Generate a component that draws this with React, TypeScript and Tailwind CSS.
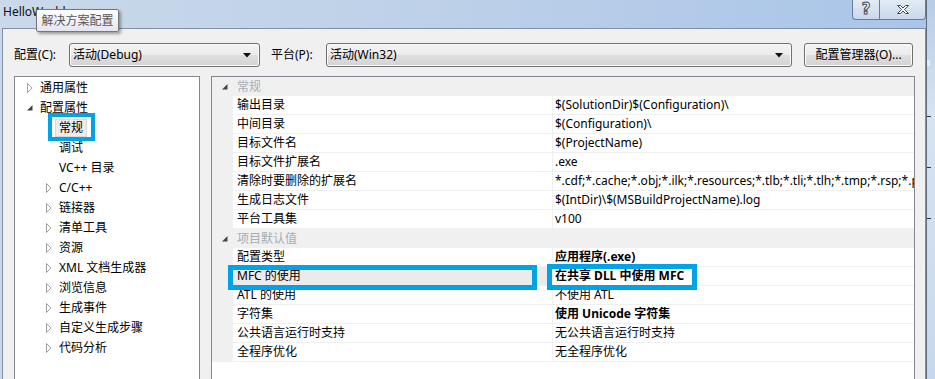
import React from "react";

const FONT = "font-['Noto_Sans','Noto_Sans_CJK_SC',sans-serif]";

type TreeItem = {
  label: string;
  level: 1 | 2;
  icon: "closed" | "open" | "none";
  selected?: boolean;
};

const tree: TreeItem[] = [
  { label: "通用属性", level: 1, icon: "closed" },
  { label: "配置属性", level: 1, icon: "open" },
  { label: "常规", level: 2, icon: "none", selected: true },
  { label: "调试", level: 2, icon: "none" },
  { label: "VC++ 目录", level: 2, icon: "none" },
  { label: "C/C++", level: 2, icon: "closed" },
  { label: "链接器", level: 2, icon: "closed" },
  { label: "清单工具", level: 2, icon: "closed" },
  { label: "资源", level: 2, icon: "closed" },
  { label: "XML 文档生成器", level: 2, icon: "closed" },
  { label: "浏览信息", level: 2, icon: "closed" },
  { label: "生成事件", level: 2, icon: "closed" },
  { label: "自定义生成步骤", level: 2, icon: "closed" },
  { label: "代码分析", level: 2, icon: "closed" },
];

type Prop = { name: string; value: string; bold?: boolean; selected?: boolean };

const sections: { title: string; rows: Prop[] }[] = [
  {
    title: "常规",
    rows: [
      { name: "输出目录", value: "$(SolutionDir)$(Configuration)\\" },
      { name: "中间目录", value: "$(Configuration)\\" },
      { name: "目标文件名", value: "$(ProjectName)" },
      { name: "目标文件扩展名", value: ".exe" },
      {
        name: "清除时要删除的扩展名",
        value:
          "*.cdf;*.cache;*.obj;*.ilk;*.resources;*.tlb;*.tli;*.tlh;*.tmp;*.rsp;*.pgc;*.pgd;*.meta",
      },
      { name: "生成日志文件", value: "$(IntDir)\\$(MSBuildProjectName).log" },
      { name: "平台工具集", value: "v100" },
    ],
  },
  {
    title: "项目默认值",
    rows: [
      { name: "配置类型", value: "应用程序(.exe)", bold: true },
      { name: "MFC 的使用", value: "在共享 DLL 中使用 MFC", bold: true, selected: true },
      { name: "ATL 的使用", value: "不使用 ATL" },
      { name: "字符集", value: "使用 Unicode 字符集", bold: true },
      { name: "公共语言运行时支持", value: "无公共语言运行时支持" },
      { name: "全程序优化", value: "无全程序优化" },
    ],
  },
];

const ClosedArrow = () => (
  <svg width="6" height="10" viewBox="0 0 6 10">
    <path d="M0.5 0.5 L5 5 L0.5 9.5 Z" fill="#ffffff" stroke="#a2a2a2" strokeWidth="1" />
  </svg>
);

const OpenArrow = () => (
  <svg width="6" height="6" viewBox="0 0 6 6">
    <path d="M5.5 0 L5.5 5.5 L0 5.5 Z" fill="#454545" />
  </svg>
);

const ComboArrow = () => (
  <svg width="8" height="5" viewBox="0 0 8 5">
    <path d="M0 0 L8 0 L4 4.5 Z" fill="#111" />
  </svg>
);

const Combo = ({ text, width }: { text: string; width: string }) => (
  <div
    className={`${width} h-[24px] flex items-center justify-between rounded-[3px] border border-[#707070] bg-[linear-gradient(to_bottom,#f4f4f4_0%,#ececec_48%,#dfdfdf_52%,#d3d3d3_100%)] pl-[3px] pr-[8px] shadow-[inset_0_0_0_1px_#fbfbfb]`}
  >
    <span className="text-[12px] text-black">{text}</span>
    <ComboArrow />
  </div>
);

export default function App() {
  return (
    <div className={`relative w-[935px] h-[379px] overflow-hidden flex ${FONT}`}>
      {/* dialog window */}
      <div className="w-[926px] h-full flex flex-col bg-[#c9d8ea]">
        {/* title bar */}
        <div className="relative shrink-0 h-[28px] flex items-center pl-[3px] bg-[linear-gradient(to_right,#cad9ea,#bcd0e8_50%,#a9c5e9)]">
          <span className="text-[12px] text-[#101010] -mt-[4px]">HelloWorld</span>
          <div className="absolute right-0 top-0 flex">
            <div className="w-[28px] h-[20px] flex items-center justify-center border border-t-0 border-[#6b7b91] rounded-bl-[4px] bg-[linear-gradient(to_bottom,#e3ebf5,#c9d8ec)]">
              <span className="text-[15px] font-bold leading-none text-white [-webkit-text-stroke:1px_#3f4a58] font-['DejaVu_Sans',sans-serif]">
                ?
              </span>
            </div>
            <div className="w-[46px] h-[20px] flex items-center justify-center border border-l-0 border-t-0 border-[#6b7b91] rounded-br-[4px] bg-[linear-gradient(to_bottom,#e3ebf5,#c9d8ec)]">
              <svg width="14" height="11" viewBox="0 0 14 11">
                <path
                  d="M1.5 1.5 L4.5 1.5 L7 4 L9.5 1.5 L12.5 1.5 L8.5 5.5 L12.5 9.5 L9.5 9.5 L7 7 L4.5 9.5 L1.5 9.5 L5.5 5.5 Z"
                  fill="#ffffff"
                  stroke="#3f4a58"
                  strokeWidth="1"
                  strokeLinejoin="round"
                />
              </svg>
            </div>
          </div>
        </div>

        {/* client area */}
        <div className="flex-1 min-h-0 overflow-hidden ml-[2px] border-l border-t border-r border-[#7f8fa4] bg-[#f0f0f0] pl-[11px] pt-[14px]">
          {/* toolbar */}
          <div className="flex items-center h-[24px]">
            <span className="w-[55px] text-[12px] text-black">配置(C):</span>
            <Combo text="活动(Debug)" width="w-[191px]" />
            <span className="ml-[11px] w-[55px] text-[12px] text-black">平台(P):</span>
            <Combo text="活动(Win32)" width="w-[466px]" />
            <div className="ml-[12px] w-[109px] h-[24px] flex items-center justify-center rounded-[3px] border border-[#707070] bg-[linear-gradient(to_bottom,#f4f4f4_0%,#ececec_48%,#dfdfdf_52%,#d3d3d3_100%)] shadow-[inset_0_0_0_1px_#fbfbfb]">
              <span className="text-[12px] text-black">配置管理器(O)...</span>
            </div>
          </div>

          {/* panels */}
          <div className="flex mt-[9px] h-[320px]">
            {/* tree */}
            <div className="w-[186px] h-full border border-[#828790] bg-white pt-px">
              {tree.map((item) => (
                <div
                  key={item.label}
                  className={`flex items-center h-[20px] ${item.level === 1 ? "pl-[12px]" : "pl-[31px]"}`}
                >
                  <div className="w-[13px] flex items-center">
                    {item.icon === "closed" && <ClosedArrow />}
                    {item.icon === "open" && <OpenArrow />}
                  </div>
                  {item.selected ? (
                    <span className="-ml-[4px] h-[18px] flex items-center px-[3px] border border-[#d9d9d9] bg-[#ececec] text-[12px] text-black">
                      {item.label}
                    </span>
                  ) : (
                    <span className="text-[12px] text-black whitespace-nowrap">{item.label}</span>
                  )}
                </div>
              ))}
            </div>

            {/* property grid */}
            <div className="ml-[11px] w-[704px] h-full border border-[#828790] bg-white overflow-hidden">
              {sections.map((section) => (
                <div key={section.title}>
                  <div className="h-[19px] flex items-center bg-[#f0f0f0]">
                    <div className="w-[21px] flex justify-end pr-[5px]">
                      <OpenArrow />
                    </div>
                    <span className="pl-[4px] text-[12px] text-[#a7adb6]">{section.title}</span>
                  </div>
                  {section.rows.map((row) => (
                    <div key={row.name} className="h-[19px] flex bg-[#f0f0f0]">
                      <div className="w-[21px]" />
                      <div
                        className={`w-[319px] h-[18px] flex items-center pl-[4px] ${row.selected ? "bg-[#ebebeb]" : "bg-white"}`}
                      >
                        <span className="text-[12px] text-black whitespace-nowrap">{row.name}</span>
                      </div>
                      <div className="flex-1 ml-px h-[18px] flex items-center pl-[2px] bg-white overflow-hidden">
                        <span className={`text-[12px] text-black whitespace-nowrap ${row.bold ? "font-bold" : ""}`}>
                          {row.value}
                        </span>
                      </div>
                    </div>
                  ))}
                </div>
              ))}
            </div>
          </div>
        </div>
      </div>

      {/* window behind, right edge */}
      <div className="w-[9px] h-full border-l border-[#5d6b7c] bg-[linear-gradient(to_bottom,#b8cde6,#d7e3f1_30%,#c8d8ec)] flex flex-col items-start pt-[60px] gap-[50px]">
        <div className="w-[3px] h-[6px] bg-[#e7eef7]" />
        <div className="w-[4px] h-px bg-[#333]" />
        <div className="w-[4px] h-px bg-[#333]" />
        <div className="w-[4px] h-px bg-[#333]" />
      </div>

      {/* tooltip */}
      <div className="absolute left-[36px] top-[9px] w-[83px] h-[23px] flex items-center justify-center rounded-[2px] border border-[#767676] bg-[linear-gradient(to_bottom,#ffffff,#e4e5f0)] shadow-[2px_2px_3px_rgba(0,0,0,0.35)]">
        <span className="text-[12px] text-[#575757]">解决方案配置</span>
      </div>

      {/* annotation boxes */}
      <div className="absolute left-[48px] top-[113px] w-[47px] h-[28px] border-[4px] border-[#00a2e8]" />
      <div className="absolute left-[228px] top-[265px] w-[309px] h-[25px] border-[5px] border-[#00a2e8]" />
      <div className="absolute left-[547px] top-[264px] w-[150px] h-[26px] border-[5px] border-[#00a2e8]" />
    </div>
  );
}
